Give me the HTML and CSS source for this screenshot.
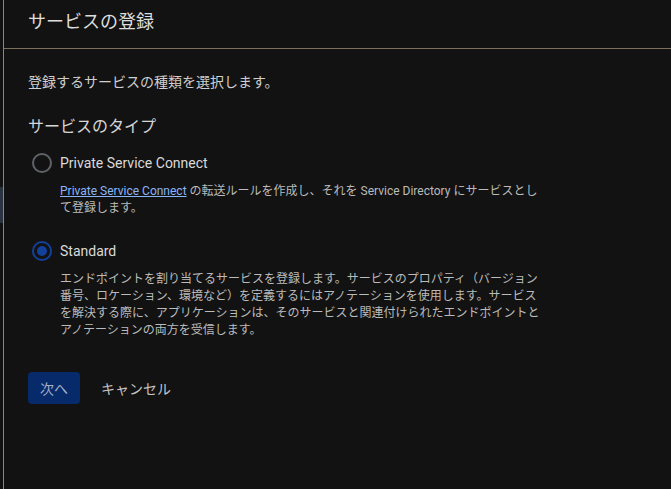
FILE: index.html
```html
<!DOCTYPE html>
<html lang="ja">
<head>
<meta charset="utf-8">
<title>サービスの登録</title>
<link rel="stylesheet" href="styles.css">
</head>
<body>
<div class="layout">
  <div class="rail"><div class="rail-mark"></div></div>
  <div class="panel">
    <header class="panel-header">
      <h1 class="title">サービスの登録</h1>
    </header>
    <main class="content">
      <p class="intro">登録するサービスの種類を選択します。</p>
      <h2 class="section-title">サービスのタイプ</h2>
      <div class="options">
        <div class="option">
          <label class="radio-row">
            <span class="radio"></span>
            <span class="radio-label">Private Service Connect</span>
          </label>
          <p class="desc"><a class="link" href="#">Private Service Connect</a> の転送ルールを作成し、それを Service Directory にサービスとして登録します。</p>
        </div>
        <div class="option">
          <label class="radio-row">
            <span class="radio checked"></span>
            <span class="radio-label">Standard</span>
          </label>
          <p class="desc">エンドポイントを割り当てるサービスを登録します。サービスのプロパティ（バージョン番号、ロケーション、環境など）を定義するにはアノテーションを使用します。サービスを解決する際に、アプリケーションは、そのサービスと関連付けられたエンドポイントとアノテーションの両方を受信します。</p>
        </div>
      </div>
      <div class="actions">
        <button class="btn btn-primary">次へ</button>
        <button class="btn btn-text">キャンセル</button>
      </div>
    </main>
  </div>
</div>
</body>
</html>
```
FILE: styles.css
```css
* { box-sizing: border-box; }
html, body { margin: 0; padding: 0; }
body {
  background: #121212;
  color: #e3e3e3;
  font-family: "Roboto", "Noto Sans CJK JP", sans-serif;
  width: 671px;
  height: 489px;
  overflow: hidden;
}
.layout {
  display: flex;
  height: 489px;
}
.rail {
  width: 3px;
  flex: none;
}
.rail-mark {
  margin-top: 187px;
  height: 36px;
  background: #2a3341;
}
.panel {
  flex: 1;
  border-left: 1px solid #8f8677;
  display: flex;
  flex-direction: column;
}
.panel-header {
  height: 49px;
  border-bottom: 1px solid #7d705f;
  padding: 9px 24px 0;
}
.title {
  margin: 0;
  font-size: 18px;
  line-height: 26px;
  font-weight: 400;
  color: #dedede;
}
.content {
  padding: 0 24px;
}
.intro {
  margin: 23px 0 0;
  font-size: 14px;
  line-height: 20px;
  color: #cfcfcf;
}
.section-title {
  margin: 23px 0 0;
  font-size: 16px;
  line-height: 24px;
  font-weight: 400;
  color: #d6d6d6;
}
.options {
  margin-top: 12px;
  display: flex;
  flex-direction: column;
  gap: 22px;
}
.radio-row {
  display: flex;
  align-items: center;
  gap: 8px;
  height: 24px;
  padding-left: 4px;
}
.radio {
  width: 20px;
  height: 20px;
  border-radius: 50%;
  border: 2px solid #5f6368;
  display: flex;
  align-items: center;
  justify-content: center;
}
.radio.checked {
  border-color: #12409a;
}
.radio.checked::after {
  content: "";
  width: 10px;
  height: 10px;
  border-radius: 50%;
  background: #12409a;
}
.radio-label {
  font-size: 14px;
  line-height: 20px;
  color: #dadada;
}
.desc {
  margin: 8px 0 0;
  padding-left: 32px;
  width: 513px;
  font-size: 12px;
  line-height: 17px;
  color: #bbbbbb;
}
.link {
  color: #8ab4f8;
  text-decoration: underline;
  text-underline-offset: 1px;
}
.actions {
  margin-top: 33px;
  display: flex;
  gap: 8px;
}
.btn {
  height: 32px;
  border: none;
  border-radius: 4px;
  font-family: inherit;
  font-size: 14px;
  padding: 0 12px;
  background: transparent;
  cursor: pointer;
}
.btn-primary {
  background: #062a6a;
  color: #a4b0c8;
}
.btn-text {
  color: #c4c4c4;
  padding: 0 13px;
}
```
